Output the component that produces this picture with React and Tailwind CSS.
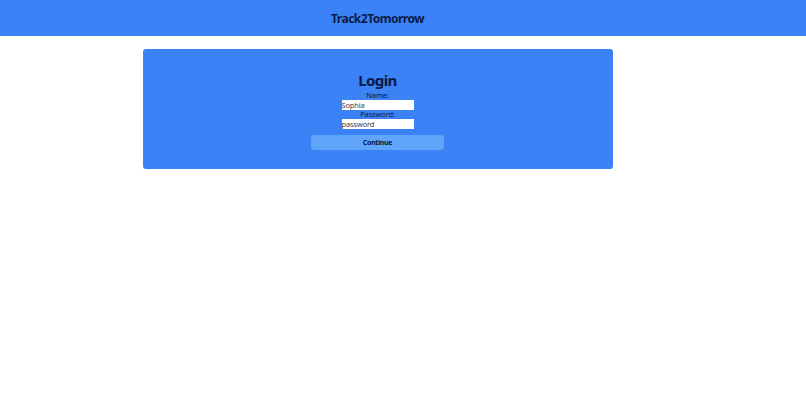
export default function App() {
  return (
    <div className="min-h-screen bg-white text-[#0b1a45]" style={{ fontFamily: '"Noto Sans", "Open Sans", sans-serif' }}>
      <header className="h-[36px] bg-[#3b82f6]">
        <div className="w-[755px] h-full flex items-center justify-center pt-[2px]">
          <h1 className="text-[12px] font-bold leading-none tracking-[-0.5px]">Track2Tomorrow</h1>
        </div>
      </header>
      <div className="w-[755px] flex justify-center pt-[13px]">
        <div className="w-[470px] h-[120px] bg-[#3b82f6] rounded-[3px] flex flex-col items-center pt-[22px]">
          <h2 className="text-[15px] font-bold leading-[18px] tracking-[-0.6px]">Login</h2>
          <label className="text-[7.5px] leading-[9px] mt-[2px] tracking-[-0.15px]">Name:</label>
          <input className="w-[72px] h-[10px] bg-white text-[7.5px] text-[#374151] leading-[10px] px-0 outline-none tracking-[-0.15px]" defaultValue="Sophia" />
          <label className="text-[7.5px] leading-[9px] tracking-[-0.15px]">Password:</label>
          <input className="w-[72px] h-[10px] bg-white text-[7.5px] text-[#374151] leading-[10px] px-0 outline-none tracking-[-0.15px]" defaultValue="password" />
          <button className="mt-[6px] w-[133px] h-[15px] bg-[#60a5fa] rounded-[3px] text-[7px] font-bold leading-none tracking-[-0.3px]">Continue</button>
        </div>
      </div>
    </div>
  );
}
